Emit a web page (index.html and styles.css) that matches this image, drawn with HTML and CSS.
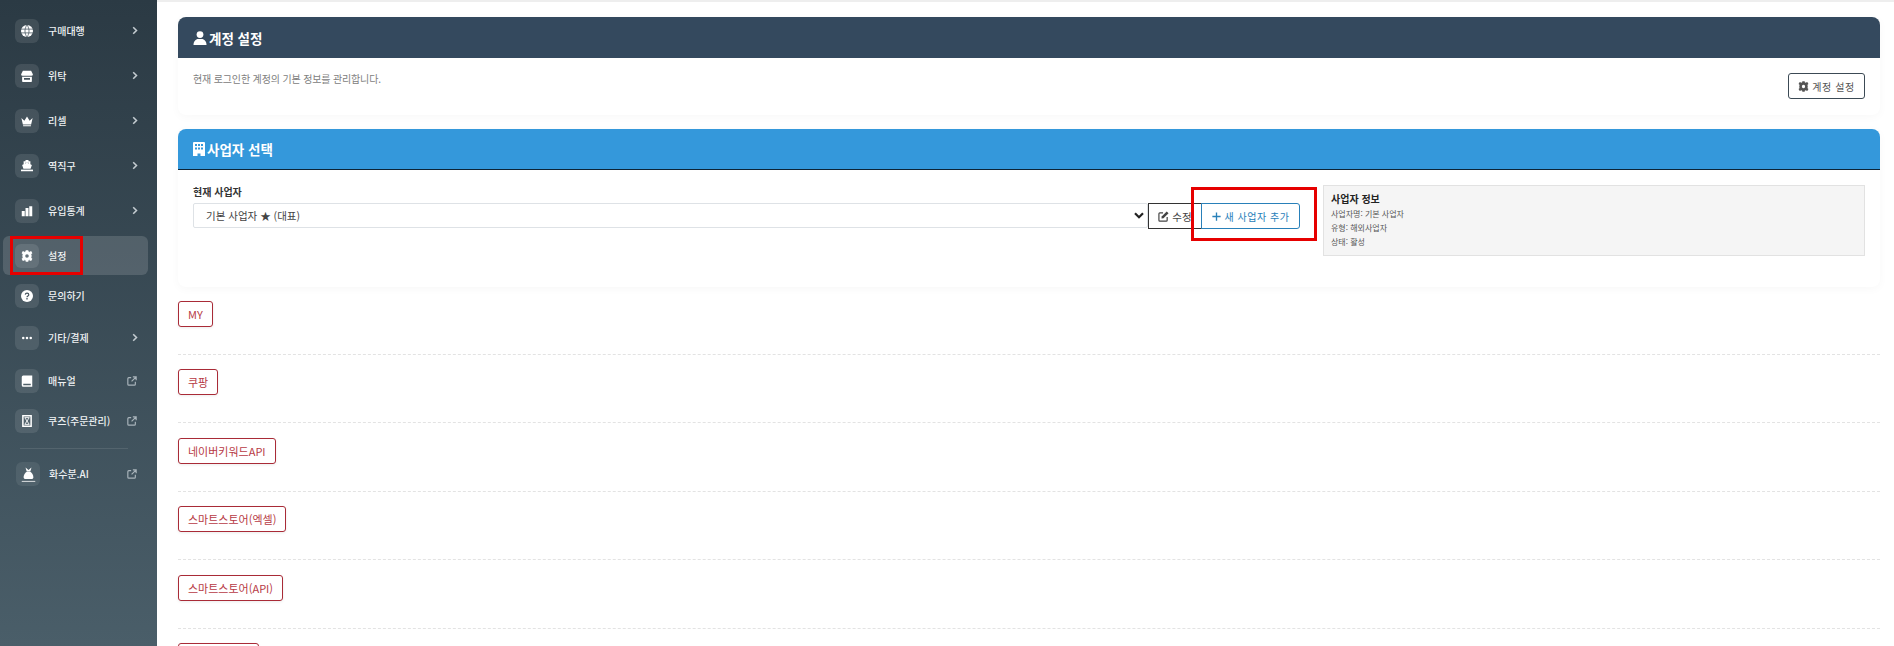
FILE: index.html
```html
<!DOCTYPE html>
<html lang="ko">
<head>
<meta charset="utf-8">
<title>설정</title>
<link rel="stylesheet" href="styles.css">
</head>
<body>
<svg class="defs" width="0" height="0">
  <symbol id="chev" viewBox="0 0 10 14"><path d="M2 1.500 7.500 7 2 12.500" fill="none" stroke="currentColor" stroke-width="2.600"/></symbol>
  <symbol id="ext" viewBox="0 0 12 12"><path d="M5 2H2.200A1.200 1.200 0 0 0 1 3.200V9.800A1.200 1.200 0 0 0 2.200 11H8.800A1.200 1.200 0 0 0 10 9.800V7" fill="none" stroke="currentColor" stroke-width="1.400"/><path d="M7 1h4v4M11 1 5.500 6.500" fill="none" stroke="currentColor" stroke-width="1.400"/></symbol>
  <symbol id="gear" viewBox="0 0 16 16"><circle cx="8" cy="8" r="4.300" fill="none" stroke="currentColor" stroke-width="3.800"/><path d="M6.300.4h3.400l.4 3h-4.200zM6.300 15.600h3.400l.4-3h-4.200zM.8 4.200l1.700-2.900 2.700 1.200-2.100 3.600zM15.200 11.800l-1.700 2.900-2.700-1.200 2.100-3.600zM.8 11.800l1.700 2.900 2.700-1.200-2.100-3.600zM15.200 4.200l-1.700-2.900-2.700 1.200 2.100 3.600z" fill="currentColor"/></symbol>
</svg>
<div class="app">
  <aside class="sidebar">
    <nav class="nav">
      <a class="item item-sub"><span class="tile"><svg class="ico" viewBox="0 0 16 16"><circle cx="8" cy="8" r="8" fill="currentColor"/><path d="M0 5.500h16M0 10.500h16M8 0c-3.600 4.500-3.600 11.500 0 16M8 0c3.600 4.500 3.600 11.500 0 16" fill="none" stroke="#46545e" stroke-width="1"/></svg></span><span class="label">구매대행</span><svg class="chev"><use href="#chev"/></svg></a>
      <a class="item item-sub"><span class="tile"><svg class="ico" viewBox="0 0 16 16"><path d="M2.500 1h11L15.800 5.500a2 2 0 0 1-2 2.300H2.200a2 2 0 0 1-2-2.300z" fill="currentColor"/><path d="M1.500 9h13v6a1 1 0 0 1-1 1h-11a1 1 0 0 1-1-1zm2.500 1.500v2.500h8v-2.500z" fill="currentColor" fill-rule="evenodd"/></svg></span><span class="label">위탁</span><svg class="chev"><use href="#chev"/></svg></a>
      <a class="item item-sub"><span class="tile"><svg class="ico" viewBox="0 0 16 16"><path d="M0.500 4 4.500 7.500 8 2 11.500 7.500 15.500 4 13.500 12.500H2.500zM2.800 13.500h10.400V15H2.800z" fill="currentColor"/></svg></span><span class="label">리셀</span><svg class="chev"><use href="#chev"/></svg></a>
      <a class="item item-sub"><span class="tile"><svg class="ico" viewBox="0 0 16 16"><path d="M6 0h4v1.500h2.500v4L14.500 6.500 12.800 11.500H3.200L1.500 6.500 3.500 5.500v-4H6zM5.500 3.500v1.200L8 3.800l2.500.9V3.500z" fill="currentColor" fill-rule="evenodd"/><path d="M0 12.800h16V15H0z" fill="currentColor"/></svg></span><span class="label">역직구</span><svg class="chev"><use href="#chev"/></svg></a>
      <a class="item item-sub"><span class="tile"><svg class="ico" viewBox="0 0 16 16"><path d="M1 8h4v7H1zM6 4h4v11H6zM11 1.500h4V15h-4z" fill="currentColor"/></svg></span><span class="label">유입통계</span><svg class="chev"><use href="#chev"/></svg></a>
      <a class="item item-active"><span class="tile"><svg class="ico"><use href="#gear"/></svg></span><span class="label">설정</span></a>
      <a class="item item-plain"><span class="tile"><svg class="ico" viewBox="0 0 16 16"><circle cx="8" cy="8" r="8" fill="currentColor"/><path d="M5.700 6.200A2.300 2.300 0 0 1 8 4.200c1.400 0 2.400.8 2.400 2 0 1.800-2.400 1.700-2.400 3.400" fill="none" stroke="#46545e" stroke-width="1.600"/><circle cx="8" cy="11.800" r="1.100" fill="#46545e"/></svg></span><span class="label">문의하기</span></a>
      <a class="item item-more"><span class="tile"><svg class="ico" viewBox="0 0 16 16"><circle cx="3" cy="8" r="1.700" fill="currentColor"/><circle cx="8" cy="8" r="1.700" fill="currentColor"/><circle cx="13" cy="8" r="1.700" fill="currentColor"/></svg></span><span class="label">기타/결제</span><svg class="chev"><use href="#chev"/></svg></a>
      <a class="item item-book"><span class="tile"><svg class="ico" viewBox="0 0 16 16"><path d="M3 0.500H15v15H3A2 2 0 0 1 1 13.500V2.500A2 2 0 0 1 3 .5zM3 11.500v2H13v-2z" fill="currentColor" fill-rule="evenodd"/></svg></span><span class="label">매뉴얼</span><svg class="ext"><use href="#ext"/></svg></a>
      <a class="item item-quiz"><span class="tile"><svg class="ico" viewBox="0 0 16 16"><path d="M2.500 1h11v14h-11z" fill="none" stroke="currentColor" stroke-width="2"/><path d="M5 3.500h6L5 12.500h6z" fill="none" stroke="currentColor" stroke-width="1.200"/></svg></span><span class="label">쿠즈(주문관리)</span><svg class="ext"><use href="#ext"/></svg></a>
      <div class="divider"></div>
      <a class="item item-ai"><span class="tile tile-ai"><svg class="ico-ai" viewBox="0 0 20 22"><path d="M6 1.500 10 5l4-3.500-1.500 5h-5z" fill="currentColor"/><path d="M8 7h4c3.200 2 4.500 5 4.500 7.500 0 1.500-1 2.500-2.500 2.500H6c-1.500 0-2.500-1-2.500-2.500C3.500 12 4.800 9 8 7z" fill="currentColor"/><path d="M1 19.500h18V21H1z" fill="currentColor" opacity=".7"/></svg></span><span class="label label-ai">화수분.AI</span><svg class="ext"><use href="#ext"/></svg></a>
    </nav>
  </aside>

  <main class="main">
    <section class="card">
      <header class="card-head head-dark">
        <svg class="head-ico" viewBox="0 0 14 14"><circle cx="7" cy="3.600" r="3.400" fill="currentColor"/><path d="M0.500 14c0-3.600 2.200-6 4.800-6h3.400c2.600 0 4.800 2.400 4.800 6z" fill="currentColor"/></svg>
        <h2 class="card-title">계정 설정</h2>
      </header>
      <div class="card-body account-body">
        <p class="muted">현재 로그인한 계정의 기본 정보를 관리합니다.</p>
        <button class="btn btn-account"><svg class="btn-ico"><use href="#gear"/></svg>계정 설정</button>
      </div>
    </section>

    <section class="card">
      <header class="card-head head-blue">
        <svg class="head-ico head-ico-b" viewBox="0 0 12 14"><path d="M1 0h10a1 1 0 0 1 1 1v13H7.500v-2.500h-3V14H0V1a1 1 0 0 1 1-1zm1 2v2h2V2zm3 0v2h2V2zm3 0v2h2V2zM2 5.500v2h2v-2zm3 0v2h2v-2zm3 0v2h2v-2z" fill="currentColor" fill-rule="evenodd"/></svg>
        <h2 class="card-title">사업자 선택</h2>
      </header>
      <div class="card-body biz-body">
        <div class="biz-left">
          <label class="biz-label">현재 사업자</label>
          <div class="biz-row">
            <div class="select"><span>기본 사업자 ★ (대표)</span><svg class="caret" viewBox="0 0 10 7"><path d="M1 1.200 5 5.200 9 1.200" fill="none" stroke="currentColor" stroke-width="2.200"/></svg></div>
            <button class="btn btn-edit"><svg class="btn-ico" viewBox="0 0 12 12"><path d="M5.500 2H2a1 1 0 0 0-1 1v7a1 1 0 0 0 1 1h7a1 1 0 0 0 1-1V6.500" fill="none" stroke="currentColor" stroke-width="1.300"/><path d="M9.500.5 11.500 2.500 6 8 3.800 8.200 4 6z" fill="currentColor"/></svg>수정</button>
            <button class="btn btn-add"><svg class="btn-ico btn-ico-plus" viewBox="0 0 12 12"><path d="M6 .5v11M.5 6h11" fill="none" stroke="currentColor" stroke-width="1.800"/></svg>새 사업자 추가</button>
          </div>
        </div>
        <div class="info">
          <strong class="info-title">사업자 정보</strong>
          <p class="info-line">사업자명: 기본 사업자</p>
          <p class="info-line">유형: 해외사업자</p>
          <p class="info-line">상태: 활성</p>
        </div>
      </div>
    </section>

    <div class="row"><button class="tag">MY</button></div>
    <div class="row"><button class="tag">쿠팡</button></div>
    <div class="row"><button class="tag">네이버키워드API</button></div>
    <div class="row"><button class="tag">스마트스토어(엑셀)</button></div>
    <div class="row"><button class="tag">스마트스토어(API)</button></div>
    <div class="row"><button class="tag">스마트스토어</button></div>

    <div class="mark mark-menu"></div>
    <div class="mark mark-add"></div>
  </main>
</div>
</body>
</html>
```

FILE: styles.css
```css
* { box-sizing: border-box; }
html, body { margin: 0; height: 646px; overflow: hidden; background: #fff; }
body { font-family: "Noto Sans CJK KR", "Noto Sans", sans-serif; color: #333; }
.defs { position: absolute; }
.app { display: flex; height: 646px; }

.sidebar { width: 157px; flex: none; height: 646px; background: linear-gradient(180deg, #2b3a44 0%, #4a5e69 100%); color: #fff; overflow: hidden; }
.nav { display: flex; flex-direction: column; padding: 8px 0 0 3px; }
.item { display: flex; align-items: center; width: 145px; height: 45px; padding-left: 12px; border-radius: 6px; flex: none; }
.item-active { height: 39px; margin-top: 3px; background: rgba(255,255,255,.14); }
.item-plain { height: 40px; margin-top: 1px; }
.item-more { height: 43px; }
.item-book { height: 44px; }
.item-quiz { height: 40px; margin-top: -2px; }
.item-ai { height: 40px; padding-left: 13px; }
.tile { width: 24px; height: 24px; flex: none; display: flex; align-items: center; justify-content: center; background: rgba(255,255,255,.1); border-radius: 6px; }
.ico { width: 12px; height: 12px; color: #fff; }
.ico-ai { width: 15px; height: 17px; color: #fff; }
.tile-ai { background: rgba(255,255,255,.08); }
.label { margin-left: 9px; font-size: 10px; font-weight: 500; line-height: 14px; color: #eef1f3; white-space: nowrap; flex: 1; }
.label-ai { margin-left: 9px; }
.chev { width: 6px; height: 9px; color: #c4ccd1; margin-right: 10px; flex: none; }
.ext { width: 10px; height: 10px; color: #a9b4bb; margin-right: 11px; flex: none; }
.divider { width: 108px; height: 1px; background: rgba(255,255,255,.1); margin: 7px 0 5px 17px; }

.main { flex: 1; position: relative; padding: 15px 14px 0 21px; border-top: 2px solid #eee; min-width: 0; }
.card { background: #fff; border-radius: 8px; box-shadow: 0 2px 10px rgba(0,0,0,.03); margin-bottom: 14px; }
.card-head { display: flex; align-items: center; color: #fff; padding-left: 15px; border-radius: 8px 8px 0 0; }
.head-dark { height: 41px; background: #34495e; }
.head-blue { height: 41px; background: #3498db; border-bottom: 1px solid #0d2436; }
.head-ico { width: 14px; height: 14px; margin-right: 2px; }
.head-ico-b { width: 12px; height: 14px; margin-right: 2px; }
.card-title { margin: 0; font-size: 13.5px; font-weight: 700; line-height: 20px; }
.card-body { padding: 15px; }
.account-body { height: 57px; display: flex; justify-content: space-between; align-items: flex-start; padding-top: 15px; padding-bottom: 0; }
.muted { margin: 0; font-size: 10px; line-height: 12px; color: #808080; letter-spacing: -.15px; }
.btn { display: inline-flex; align-items: center; justify-content: center; height: 26px; background: #fff; font-family: inherit; font-size: 10px; cursor: pointer; padding: 0; white-space: nowrap; }
.btn-ico { width: 11px; height: 11px; margin-right: 3px; flex: none; }
.btn-ico-plus { width: 9px; height: 9px; margin-right: 4px; }
.btn-account { width: 77px; border: 1px solid #3c4a55; border-radius: 3px; color: #555; letter-spacing: .6px; }
.biz-body { height: 117px; display: flex; padding: 15px 15px 0; gap: 23px; }
.biz-left { flex: 1; min-width: 0; }
.biz-label { display: block; font-size: 10px; font-weight: 700; line-height: 14px; color: #333; margin-bottom: 4px; }
.biz-row { display: flex; height: 26px; }
.select { flex: 1; display: flex; align-items: center; justify-content: space-between; height: 25px; border: 1px solid #dee2e6; border-radius: 2px; padding: 0 3px 0 12px; font-size: 10.5px; color: #444; }
.caret { width: 10px; height: 7px; color: #222; }
.btn-edit { width: 54px; border: 1px solid #333; color: #444; margin-right: -1px; font-size: 10.5px; }
.btn-add { width: 99px; border: 1px solid #2980b9; border-radius: 0 3px 3px 0; color: #2980b9; font-size: 10px; letter-spacing: .5px; }
.info { width: 542px; height: 71px; flex: none; background: #f5f5f5; border: 1px solid #e2e2e2; padding: 6px 7px; }
.info-title { display: block; font-size: 10px; line-height: 14px; font-weight: 700; color: #222; margin-bottom: 1px; }
.info-line { margin: 0; font-size: 8px; line-height: 14px; color: #555; }

.row { height: 68.4px; position: relative; }
.row::after { content: ""; position: absolute; left: 0; right: 0; top: 53px; border-top: 1px dashed #e3e3e3; }
.tag { display: block; height: 26px; padding: 0 9px; background: #fff; border: 1px solid #a92b37; border-radius: 3px; color: #b73a45; font-family: inherit; font-size: 11px; box-shadow: 0 1px 3px rgba(0,0,0,.08); }
.mark { position: absolute; border: 3px solid #e60000; pointer-events: none; }
.mark-menu { left: -147px; top: 234px; width: 73px; height: 39px; }
.mark-add { left: 1034px; top: 185px; width: 126px; height: 54px; }
```
